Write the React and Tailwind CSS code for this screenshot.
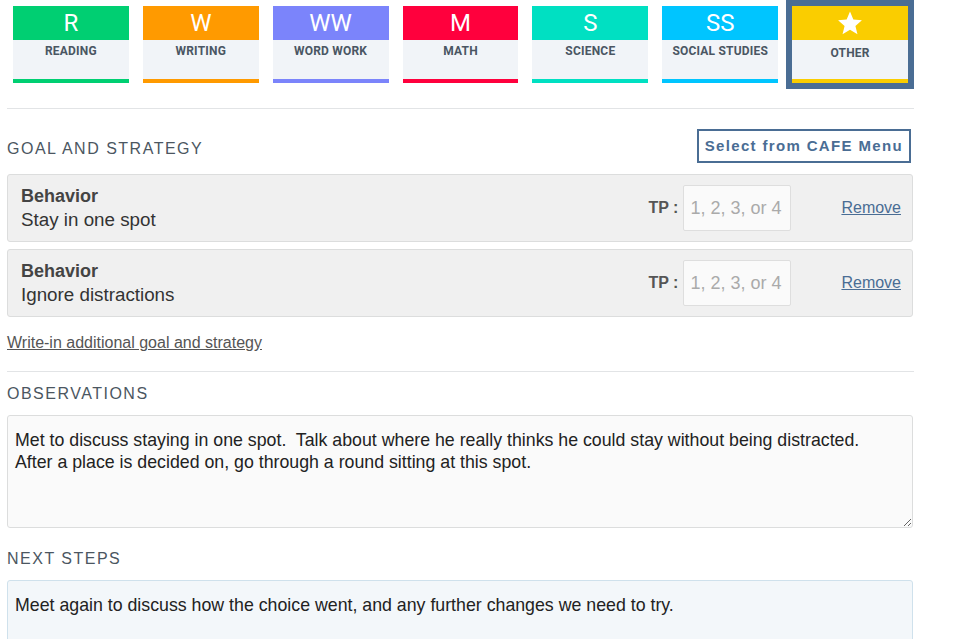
const subjects = [
  { key: 'R', label: 'READING', color: 'bg-[#00cf72]' },
  { key: 'W', label: 'WRITING', color: 'bg-[#ff9a00]' },
  { key: 'WW', label: 'WORD WORK', color: 'bg-[#7b84fb]' },
  { key: 'M', label: 'MATH', color: 'bg-[#ff003d]' },
  { key: 'S', label: 'SCIENCE', color: 'bg-[#00e0c2]' },
  { key: 'SS', label: 'SOCIAL STUDIES', color: 'bg-[#00c5ff]' },
  { key: 'star', label: 'OTHER', color: 'bg-[#facd00]', selected: true }
];

const goals = [
  { title: 'Behavior', strategy: 'Stay in one spot' },
  { title: 'Behavior', strategy: 'Ignore distractions' }
];

function Star() {
  return (
    <svg width="26" height="25" viewBox="0 0 24 23" fill="white">
      <path d="M12 0.5l3.1 7.4 7.9 0.6-6 5.2 1.9 7.8L12 17.3l-6.9 4.2 1.9-7.8-6-5.2 7.9-0.6z" />
    </svg>
  );
}

function SubjectTile({ subject }) {
  return (
    <div
      className={`flex h-[77px] flex-col ${
        subject.selected ? 'outline-6 outline-[#4a6d94]' : ''
      }`}
    >
      <div className={`flex h-[34px] items-center justify-center ${subject.color}`}>
        {subject.key === 'star' ? (
          <Star />
        ) : (
          <span className="text-[24px] leading-none text-white">{subject.key}</span>
        )}
      </div>
      <div
        className={`flex-1 bg-[#f1f4f8] text-center text-[12px] font-bold leading-[16px] tracking-[0.2px] text-[#4a5663] ${
          subject.selected ? 'pt-[5px]' : 'pt-[3px]'
        }`}
      >
        {subject.label}
      </div>
      <div className={`h-[4px] ${subject.color}`} />
    </div>
  );
}

function SectionLabel({ children }) {
  return (
    <h2 className="text-[16px] leading-[20px] tracking-[1.5px] text-[#4b5661]">{children}</h2>
  );
}

export default function App() {
  return (
    <div className="h-[639px] w-full overflow-hidden bg-white font-['Liberation_Sans',Arial,sans-serif]">
      <div className="ml-[7px] w-[907px]">
        <div className="grid grid-cols-7 gap-[14px] px-[6px] pt-[6px] font-['Roboto',sans-serif]">
          {subjects.map((subject) => (
            <SubjectTile key={subject.label} subject={subject} />
          ))}
        </div>

        <div className="mt-[25px] border-t border-[#e2e4e6]" />

        <div className="mt-[20px] flex items-center justify-between pr-[3px]">
          <div className="pt-[5px]">
            <SectionLabel>GOAL AND STRATEGY</SectionLabel>
          </div>
          <button
            type="button"
            className="border-2 border-[#4a6d94] px-[6px] py-[5px] text-[15px] font-bold leading-[20px] tracking-[1.35px] text-[#4a6d94]"
          >
            Select from CAFE Menu
          </button>
        </div>

        <div className="mt-[11px] space-y-[7px] pr-[1px]">
          {goals.map((goal) => (
            <div
              key={goal.strategy}
              className="flex h-[68px] items-center rounded-[3px] border border-[#dcdddd] bg-[#f0f0f0] pl-[13px] pr-[11px]"
            >
              <div className="leading-[23px] text-[#333]">
                <p className="text-[18px] font-bold text-[#444]">{goal.title}</p>
                <p className="text-[18.8px]">{goal.strategy}</p>
              </div>
              <div className="ml-auto flex items-center">
                <span className="text-[16px] font-bold text-[#555]">TP :</span>
                <input
                  type="text"
                  placeholder="1, 2, 3, or 4"
                  className="ml-[5px] h-[46px] w-[108px] rounded-[2px] border border-[#dedede] bg-[#fafafa] px-[6px] text-[18px] placeholder:text-[#aaa]"
                />
                <a href="#" className="ml-[50px] text-[16px] text-[#4a6d94] underline">
                  Remove
                </a>
              </div>
            </div>
          ))}
        </div>

        <a href="#" className="mt-[16px] block text-[16px] leading-[20px] text-[#555] underline">
          Write-in additional goal and strategy
        </a>

        <div className="mt-[18px] border-t border-[#e2e4e6]" />

        <div className="mt-[12px]">
          <SectionLabel>OBSERVATIONS</SectionLabel>
        </div>
        <textarea
          className="mt-[11px] block h-[113px] w-[906px] rounded-[3px] border border-[#dcdddd] bg-[#fafafa] px-[7px] pt-[13px] text-[17.75px] leading-[22px] text-[#222] outline-none"
          defaultValue={
            'Met to discuss staying in one spot.  Talk about where he really thinks he could stay without being distracted.\nAfter a place is decided on, go through a round sitting at this spot.'
          }
        />

        <div className="mt-[21px]">
          <SectionLabel>NEXT STEPS</SectionLabel>
        </div>
        <textarea
          className="mt-[11px] block h-[113px] w-[906px] rounded-[3px] border border-[#cfe1ec] bg-[#f3f7fa] px-[7px] pt-[13px] text-[17.75px] leading-[22px] text-[#222] outline-none"
          defaultValue="Meet again to discuss how the choice went, and any further changes we need to try."
        />
      </div>
    </div>
  );
}
